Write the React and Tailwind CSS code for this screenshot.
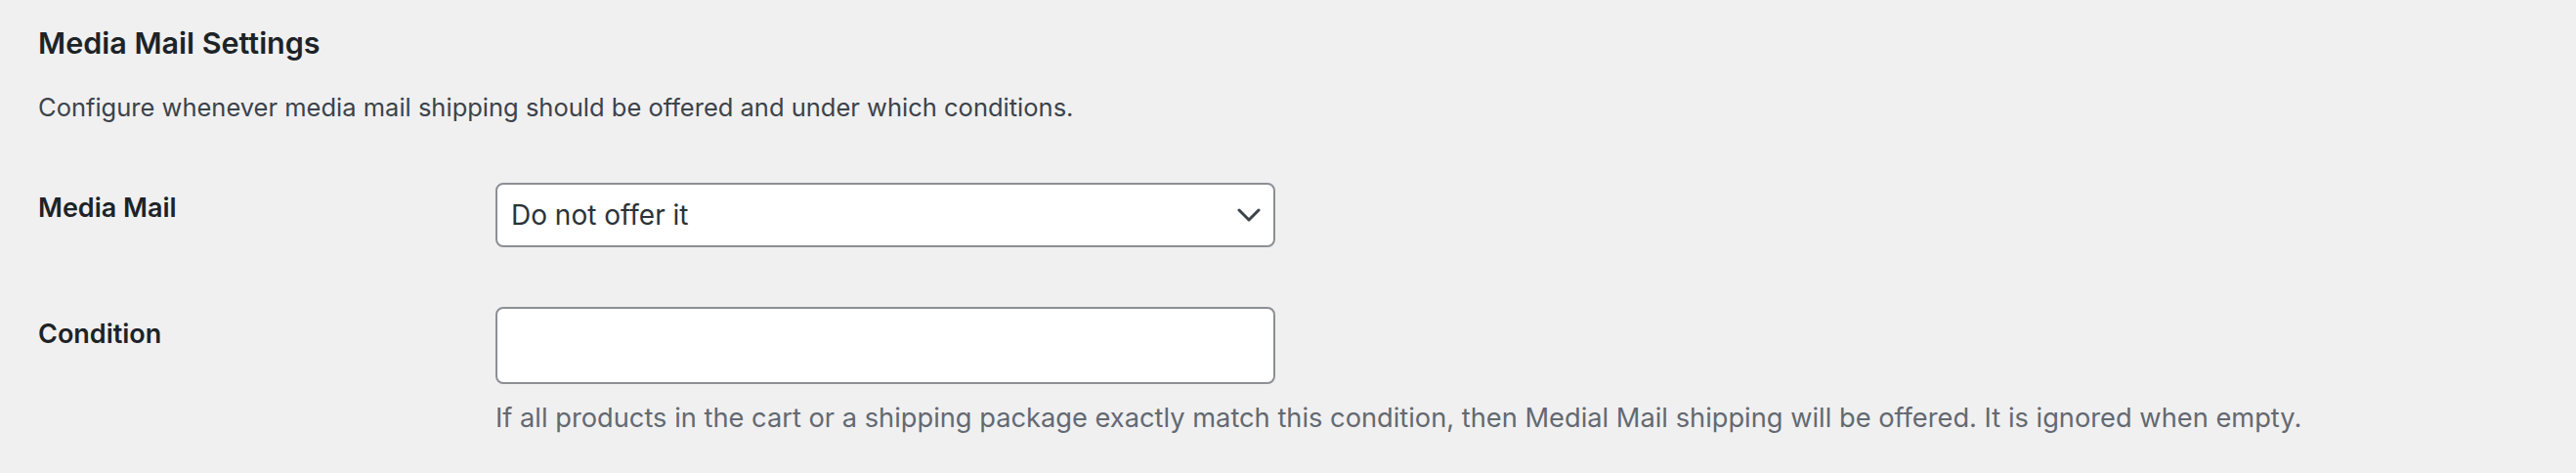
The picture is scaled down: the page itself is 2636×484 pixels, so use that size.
import { useState } from "react";

const FONT = { fontFamily: "Inter, 'Noto Sans', sans-serif" };

function Chevron() {
  return (
    <svg width="24" height="14" viewBox="0 0 24 14" fill="none" className="shrink-0">
      <path d="M2 2l10 10L22 2" stroke="#3c434a" strokeWidth="3" strokeLinecap="round" strokeLinejoin="round" />
    </svg>
  );
}

export default function App() {
  const [mode, setMode] = useState("none");
  const [condition, setCondition] = useState("");

  return (
    <div className="min-h-[484px] w-full bg-[#f0f0f1] pl-[39px] pt-[27px] text-[#1d2327]" style={FONT}>
      <h2 className="text-[30.5px] leading-[34px] font-semibold">Media Mail Settings</h2>
      <p className="mt-[33px] text-[25.5px] leading-[32px] text-[#3c434a]">
        Configure whenever media mail shipping should be offered and under which conditions.
      </p>

      {/* Media Mail select */}
      <div className="flex items-start mt-[61px]">
        <label className="w-[468px] shrink-0 pt-[9px] text-[27px] leading-[34px] font-semibold">Media Mail</label>
        <div className="relative w-[798px] h-[66px]">
          <select
            value={mode}
            onChange={(e) => setMode(e.target.value)}
            className="appearance-none w-full h-full bg-white border-2 border-[#8c8f94] rounded-[8px] pl-[14px] pr-[48px] text-[28px] text-[#2c3338] outline-none"
            style={FONT}
          >
            <option value="none">Do not offer it</option>
            <option value="always">Always offer it</option>
            <option value="condition">Offer it when condition matches</option>
          </select>
          <div className="pointer-events-none absolute right-[15px] top-[26px]">
            <Chevron />
          </div>
        </div>
      </div>

      {/* Condition */}
      <div className="flex items-start mt-[61px]">
        <label className="w-[468px] shrink-0 pt-[11px] text-[27px] leading-[34px] font-semibold">Condition</label>
        <div className="w-[798px]">
          <input
            value={condition}
            onChange={(e) => setCondition(e.target.value)}
            className="w-full h-[79px] bg-white border-2 border-[#8c8f94] rounded-[8px] px-[14px] text-[28px] text-[#2c3338] outline-none"
            style={FONT}
          />
          <p className="mt-[18px] whitespace-nowrap text-[27.25px] leading-[34px] text-[#646970]">
            If all products in the cart or a shipping package exactly match this condition, then Medial Mail shipping will be offered. It is ignored when empty.
          </p>
        </div>
      </div>
    </div>
  );
}
